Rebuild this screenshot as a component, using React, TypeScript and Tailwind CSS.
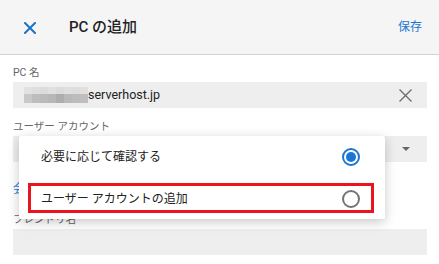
import React from "react";

const font = { fontFamily: 'Roboto, "Noto Sans CJK JP", sans-serif' };

function Mosaic() {
  const top = ["#e1e1e1", "#dedede", "#dcdcdc", "#e0e0e0", "#dbdbdb", "#dfdfdf", "#dddddd", "#e0e0e0"];
  const bottom = ["#c8c8c8", "#bdbdbd", "#bababa", "#b7b7b7", "#adadad", "#b9b9b9", "#bcbcbc", "#bebebe"];
  return (
    <div className="flex flex-col w-[64px]">
      <div className="flex h-[7px]">
        {top.map((c, i) => (
          <div key={i} className="flex-1" style={{ background: c }} />
        ))}
      </div>
      <div className="flex h-[9px]">
        {bottom.map((c, i) => (
          <div key={i} className="flex-1" style={{ background: c }} />
        ))}
      </div>
    </div>
  );
}

export default function App() {
  return (
    <div className="relative w-[439px] h-[264px] bg-white overflow-hidden" style={font}>
      {/* Header */}
      <div className="h-[55px] bg-[#f5f5f6] border-b border-[#d2d2d2] flex items-center">
        <svg className="ml-[24px] mt-[1px]" width="12" height="12" viewBox="0 0 12 12">
          <path d="M1 1 L11 11 M11 1 L1 11" stroke="#1a73c8" strokeWidth="2" strokeLinecap="square" fill="none" />
        </svg>
        <div className="ml-[33px] text-[15px] font-medium text-[#222]">PC の追加</div>
        <div className="ml-auto mr-[17px] text-[12px] text-[#1976d2]">保存</div>
      </div>

      <div className="px-[13px] pr-[12px]">
        {/* PC name */}
        <div className="mt-[11px] h-[14px] leading-[14px] text-[10.5px] text-[#666]">PC 名</div>
        <div className="mt-[2px] h-[26px] bg-[#eeeeee] flex items-center pl-[11px] pr-[15px]">
          <Mosaic />
          <span className="text-[12.5px] text-[#222]">serverhost.jp</span>
          <svg className="ml-auto" width="13" height="13" viewBox="0 0 13 13">
            <path d="M0.5 0.5 L12.5 12.5 M12.5 0.5 L0.5 12.5" stroke="#6b6b6b" strokeWidth="1.3" fill="none" />
          </svg>
        </div>

        {/* User account */}
        <div className="mt-[12px] h-[14px] leading-[14px] text-[10.5px] text-[#666]">ユーザー アカウント</div>
        <div className="mt-[2px] h-[26px] bg-[#eeeeee] flex items-center pr-[17px]">
          <svg className="ml-auto" width="8" height="4" viewBox="0 0 8 4">
            <path d="M0 0 L8 0 L4 4 Z" fill="#666" />
          </svg>
        </div>

        {/* link */}
        <div className="mt-[19px] h-[16px] leading-[16px] text-[12px] text-[#1976d2]">会</div>

        {/* Friendly name */}
        <div className="mt-[16px] h-[14px] leading-[14px] text-[10.5px] text-[#666]">フレンドリ名</div>
        <div className="mt-[2px] h-[26px] bg-[#eeeeee]" />
      </div>

      {/* Dropdown menu */}
      <div className="absolute left-[19px] top-[136px] w-[366px] h-[83px] bg-white rounded-[2px] shadow-[0_3px_12px_rgba(0,0,0,0.22)]">
        <div className="h-[42px] flex items-center pl-[22px] pr-[25px]">
          <span className="text-[12px] text-[#222]">必要に応じて確認する</span>
          <span className="ml-auto w-[18px] h-[18px] rounded-full border-2 border-[#1976d2] flex items-center justify-center">
            <span className="w-[10px] h-[10px] rounded-full bg-[#1976d2]" />
          </span>
        </div>
        <div className="h-[41px] flex items-center pl-[22px] pr-[25px]">
          <span className="text-[12px] text-[#222]">ユーザー アカウントの追加</span>
          <span className="ml-auto w-[18px] h-[18px] rounded-full border-2 border-[#757575]" />
        </div>
        {/* annotation box */}
        <div className="absolute left-[9px] top-[47px] w-[346px] h-[30px] border-[3px] border-[#e8141e]" />
      </div>
    </div>
  );
}
